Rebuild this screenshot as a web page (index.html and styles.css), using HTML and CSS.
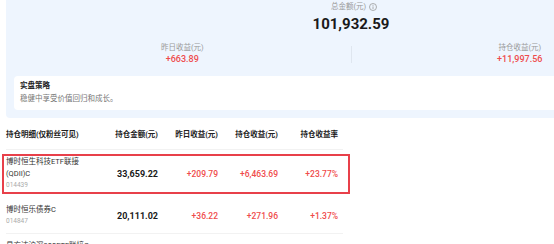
FILE: index.html
```html
<!DOCTYPE html>
<html lang="zh-CN">
<head>
  <meta charset="UTF-8" />
  <meta name="viewport" content="width=device-width, initial-scale=1.0" />
  <title>持仓</title>
  <link rel="stylesheet" href="styles.css">
</head>
<body>
  <section class="summary">
    <div class="total">
      <div class="total-label">总金额(元)
        <svg class="info-icon" width="8" height="8" viewBox="0 0 8 8">
          <circle cx="4" cy="4" r="3.5" fill="none" stroke="#9a9a9a" stroke-width="0.8"/>
          <line x1="4" y1="3.4" x2="4" y2="6" stroke="#9a9a9a" stroke-width="0.8"/>
          <circle cx="4" cy="2.2" r="0.5" fill="#9a9a9a"/>
        </svg>
      </div>
      <div class="total-value">101,932.59</div>
    </div>
    <div class="stats">
      <div class="stat">
        <div class="stat-label">昨日收益(元)</div>
        <div class="stat-value">+663.89</div>
      </div>
      <div class="stat-divider"></div>
      <div class="stat">
        <div class="stat-label">持仓收益(元)</div>
        <div class="stat-value">+11,997.56</div>
      </div>
    </div>
    <div class="strategy">
      <div class="strategy-title">实盘策略</div>
      <div class="strategy-desc">稳健中享受价值回归和成长。</div>
    </div>
  </section>

  <section class="holdings">
    <div class="row head">
      <div class="cell name">持仓明细(仅粉丝可见)</div>
      <div class="cell">持仓金额(元)</div>
      <div class="cell">昨日收益(元)</div>
      <div class="cell">持仓收益(元)</div>
      <div class="cell">持仓收益率</div>
    </div>
    <div class="row active">
      <div class="cell name">
        <div class="fund-name">博时恒生科技ETF联接(QDII)C</div>
        <div class="fund-code">014439</div>
      </div>
      <div class="cell amount">33,659.22</div>
      <div class="cell up">+209.79</div>
      <div class="cell up">+6,463.69</div>
      <div class="cell up">+23.77%</div>
    </div>
    <div class="row">
      <div class="cell name">
        <div class="fund-name">博时恒乐债券C</div>
        <div class="fund-code">014847</div>
      </div>
      <div class="cell amount">20,111.02</div>
      <div class="cell up">+36.22</div>
      <div class="cell up">+271.96</div>
      <div class="cell up">+1.37%</div>
    </div>
    <div class="row">
      <div class="cell name">
        <div class="fund-name">易方达沪深300ETF联接C</div>
        <div class="fund-code">007339</div>
      </div>
      <div class="cell amount">15,402.18</div>
      <div class="cell up">+52.40</div>
      <div class="cell up">+1,180.33</div>
      <div class="cell up">+8.29%</div>
    </div>
  </section>
</body>
</html>
```

FILE: styles.css
```css
* {
  margin: 0;
  padding: 0;
  box-sizing: border-box;
}
body {
  font-family: Roboto, "Noto Sans CJK SC", sans-serif;
  background: #fff;
  color: #222;
  overflow: hidden;
  width: 554px;
  height: 244px;
}
.summary {
  margin-left: 6px;
  width: 690px;
  background: #eef5fe;
  border-radius: 0 0 4px 4px;
  padding: 2px 8px 8px;
}
.total {
  text-align: center;
}
.total-label {
  font-size: 7.5px;
  line-height: 10px;
  color: #999;
  display: flex;
  justify-content: center;
  align-items: center;
  gap: 3px;
  padding-left: 6px;
}
.total-value {
  margin-top: 3px;
  font-size: 15px;
  line-height: 18px;
  font-weight: 700;
  color: #1a1a1a;
}
.stats {
  display: grid;
  grid-template-columns: 1fr 1px 1fr;
  align-items: center;
  margin-top: 9px;
}
.stat {
  text-align: center;
}
.stat-label {
  font-size: 7.5px;
  line-height: 11px;
  color: #999;
}
.stat-value {
  font-size: 9px;
  line-height: 13px;
  font-weight: 500;
  color: #ef4b4b;
}
.stat-divider {
  height: 17px;
  background: #dfe6ef;
}
.strategy {
  margin-top: 10px;
  background: #fff;
  border-radius: 4px;
  padding: 4px 6px 5px;
}
.strategy-title {
  font-size: 7.5px;
  line-height: 12px;
  font-weight: 700;
  color: #222;
}
.strategy-desc {
  font-size: 7.5px;
  line-height: 13px;
  color: #777;
}
.holdings {
  margin-left: 6px;
  width: 337px;
}
.row {
  display: grid;
  grid-template-columns: 92px 60px 60px 60px 60px;
  align-items: center;
  padding: 6px 5px 6px 0;
  border-bottom: 1px solid #f2f2f2;
  position: relative;
}
.row.head {
  padding: 11px 5px 8px 0;
  font-size: 7.5px;
  line-height: 12px;
  font-weight: 700;
  color: #222;
}
.row.active {
  border-bottom-color: transparent;
}
.row.active::after {
  content: '';
  position: absolute;
  top: 4px;
  bottom: 3px;
  left: -4px;
  right: -7px;
  border: 2px solid #e8404a;
}
.cell {
  text-align: right;
  white-space: nowrap;
}
.cell.name {
  text-align: left;
  white-space: normal;
}
.fund-name {
  font-size: 7.5px;
  line-height: 12px;
  color: #333;
}
.fund-code {
  font-size: 6.5px;
  line-height: 11px;
  color: #aaa;
}
.amount {
  font-size: 9px;
  font-weight: 700;
  color: #1a1a1a;
}
.up {
  font-size: 8.5px;
  font-weight: 500;
  color: #ef4b4b;
}
```
